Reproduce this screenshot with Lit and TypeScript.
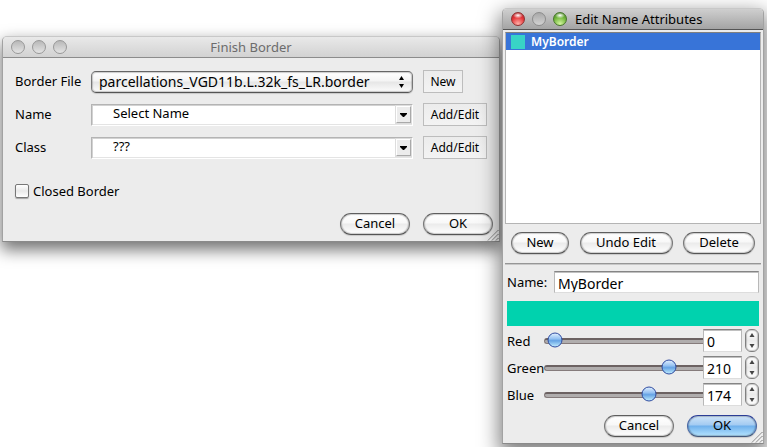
import { LitElement, html, css, svg } from "lit";
import { customElement, property, state } from "lit/decorators.js";

const shared = css`
  * {
    box-sizing: border-box;
  }
  button,
  input,
  select {
    font: inherit;
    color: inherit;
    margin: 0;
  }
  .pill {
    height: 22px;
    padding: 0 0 2px;
    border: 1px solid #666;
    border-color: #5e5e5e #777 #555;
    border-radius: 11px;
    background: linear-gradient(#fff, #f8f8f8 45%, #ebebeb 50%, #fff);
    box-shadow: inset 0 0 1px 1px rgba(0, 0, 0, 0.2), 0 1px 1px rgba(0, 0, 0, 0.15);
    line-height: 18px;
    text-align: center;
  }
  .pill.default {
    border-color: #2c3d96 #4a68a4 #44597c;
    background: linear-gradient(#cfe4f8, #a3cbf2 45%, #6fb0ec 50%, #b4e4ff);
  }
`;

@customElement("app-window")
export class AppWindow extends LitElement {
  @property() heading = "";
  @property({ type: Boolean, reflect: true }) active = false;

  static styles = [
    shared,
    css`
      :host {
        display: block;
        position: relative;
        border: 1px solid #a2a2a2;
        border-top-color: #c8c8c8;
        border-bottom-color: #8a8a8a;
        border-radius: 5px 5px 0 0;
        background: #ececec;
        box-shadow: 0 7px 16px 1px rgba(0, 0, 0, 0.55);
      }
      :host([active]) {
        z-index: 1;
        box-shadow: 0 8px 20px 3px rgba(0, 0, 0, 0.5);
      }
      .bar {
        display: grid;
        grid-template-columns: 1fr auto 1fr;
        align-items: center;
        height: 21px;
        border-bottom: 1px solid #8c8c8c;
        border-radius: 4px 4px 0 0;
        background: linear-gradient(#e9e9e9, #d2d2d2);
        color: #6c6c6c;
      }
      :host([active]) .bar {
        border-bottom-color: #555;
        background: linear-gradient(#cfcfcf, #a4a4a4);
        color: #000;
      }
      .lights {
        display: flex;
        gap: 7px;
        padding: 0 8px;
      }
      .light {
        width: 14px;
        height: 14px;
        padding: 0;
        border: 1px solid #989898;
        border-radius: 50%;
        background: linear-gradient(#b8b8b8, #e4e4e4);
      }
      :host([active]) .light {
        background: linear-gradient(#a8a8a8, #d2d2d2);
        border-color: #8c8c8c;
      }
      :host([active]) .light.close {
        border-color: #8d3030;
        background: radial-gradient(ellipse 5px 3px at 50% 20%, #fff, transparent),
          radial-gradient(circle at 50% 90%, #ffb0a8, #e5373a 55%, #a81c20);
      }
      :host([active]) .light.zoom {
        border-color: #48752c;
        background: radial-gradient(ellipse 5px 3px at 50% 20%, #fff, transparent),
          radial-gradient(circle at 50% 90%, #d4f6a0, #74b83e 55%, #3d7a1e);
      }
      .title {
        white-space: nowrap;
        line-height: 20px;
      }
      .grip {
        position: absolute;
        right: 0;
        bottom: 0;
        display: block;
      }
    `,
  ];

  render() {
    return html`
      <div class="bar">
        <div class="lights">
          <button class="light close" aria-label="Close"></button>
          <button class="light" aria-label="Minimize"></button>
          <button class="light zoom" aria-label="Zoom"></button>
        </div>
        <div class="title">${this.heading}</div>
      </div>
      <slot></slot>
      <svg class="grip" width="12" height="12" viewBox="0 0 12 12" aria-hidden="true">
        ${[1, 5, 9].map(
          (n) => svg`<path d="M${n} 11.5 L11.5 ${n}" stroke="#777" fill="none"/>
            <path d="M${n + 1} 11.5 L11.5 ${n + 1}" stroke="#fff" fill="none" opacity=".7"/>`
        )}
      </svg>
    `;
  }
}

@customElement("finish-border")
export class FinishBorder extends LitElement {
  static styles = [
    shared,
    css`
      :host {
        display: block;
        padding: 12px 6px 6px 12px;
      }
      .form {
        display: grid;
        grid-template-columns: 66px 1fr 64px;
        column-gap: 10px;
        row-gap: 10px;
        align-items: center;
        padding-right: 6px;
      }
      .form label {
        padding-bottom: 2px;
        white-space: nowrap;
      }
      .field {
        position: relative;
        display: block;
      }
      select {
        appearance: none;
        display: block;
        width: 100%;
        height: 22px;
        padding: 0 24px 3px 21px;
        border: 1px solid #fff;
        border-top: 1px solid #b4b4b4;
        border-left: 1px solid #b4b4b4;
        border-radius: 0;
        background: #fff;
        box-shadow: inset 1px 1px 0 #d2d2d2, inset 0 -1px 0 #e4e4e4;
        line-height: 16px;
      }
      select.popup {
        padding: 0 24px 0 7px;
        border: 1px solid #666;
        border-color: #666 #777 #555;
        border-radius: 5px;
        background: linear-gradient(#fff, #f4f4f4 45%, #e6e6e6 50%, #fcfcfc);
        box-shadow: inset 0 0 1px 1px rgba(0, 0, 0, 0.2), 0 1px 1px rgba(0, 0, 0, 0.15);
        font-size: 14px;
      }
      .mark {
        position: absolute;
        top: 2px;
        right: 2px;
        width: 16px;
        height: 18px;
        pointer-events: none;
      }
      .mark.box {
        width: 15px;
        height: 17px;
        border: 1px solid #fff;
        border-right-color: #a9a9a9;
        border-bottom-color: #a9a9a9;
        outline: 1px solid #ddd;
        background: #ececec;
      }
      .mark svg {
        display: block;
      }
      .flat {
        height: 23px;
        padding: 0;
        border: 1px solid #bdbdbd;
        background: linear-gradient(#ececec, #f3f3f3);
        font-size: 12px;
        line-height: 20px;
      }
      .short {
        width: 40px;
      }
      .check {
        display: flex;
        align-items: center;
        gap: 4px;
        height: 20px;
        margin-top: 22px;
      }
      .check input {
        appearance: none;
        width: 14px;
        height: 14px;
        border: 1px solid #777;
        border-radius: 2px;
        background: linear-gradient(#fff, #e9e9e9 50%, #fff);
        box-shadow: 0 1px 1px rgba(0, 0, 0, 0.3);
      }
      .actions {
        display: flex;
        justify-content: flex-end;
        gap: 13px;
        margin-top: 12px;
      }
      .pill {
        width: 70px;
      }
    `,
  ];

  private combo(id: string, label: string, value: string) {
    return html`
      <label for=${id}>${label}</label>
      <span class="field">
        <select id=${id}><option>${value}</option></select>
        <span class="mark box">
          <svg width="13" height="15" viewBox="0 0 13 15"><path d="M3 6h7v1L7 10H6L3 7z" /></svg>
        </span>
      </span>
      <button class="flat">Add/Edit</button>
    `;
  }

  render() {
    return html`
      <div class="form">
        <label for="file">Border File</label>
        <span class="field">
          <select id="file" class="popup">
            <option>parcellations_VGD11b.L.32k_fs_LR.border</option>
          </select>
          <span class="mark">
            <svg width="16" height="18" viewBox="0 0 16 18">
              <path d="M4 7L6.500 3 9 7zM4 11h5L6.500 15z" />
            </svg>
          </span>
        </span>
        <button class="flat short">New</button>
        ${this.combo("name", "Name", "Select Name")} ${this.combo("class", "Class", "???")}
      </div>
      <label class="check"><input type="checkbox" />Closed Border</label>
      <div class="actions">
        <button class="pill">Cancel</button>
        <button class="pill">OK</button>
      </div>
    `;
  }
}

@customElement("edit-attributes")
export class EditAttributes extends LitElement {
  @state() private channels = [
    { name: "Red", value: 0 },
    { name: "Green", value: 210 },
    { name: "Blue", value: 174 },
  ];

  static styles = [
    shared,
    css`
      :host {
        display: block;
        padding: 2px 2px 6px;
      }
      .list {
        height: 192px;
        margin: 0;
        padding: 0;
        list-style: none;
        border: 1px solid #b4b4b4;
        border-top-color: #808080;
        background: #fff;
      }
      .item {
        display: flex;
        align-items: center;
        gap: 6px;
        height: 17px;
        padding-left: 5px;
        background: #3874d8;
        color: #fff;
        font-size: 12px;
        font-weight: 600;
      }
      .chip {
        width: 14px;
        height: 14px;
        background: #38d3c6;
      }
      .tools {
        display: flex;
        justify-content: space-between;
        padding: 8px 6px 9px;
      }
      .w1 {
        width: 58px;
      }
      .w2 {
        width: 93px;
      }
      .w3 {
        width: 72px;
      }
      .rule {
        height: 2px;
        margin: 0;
        border: 0;
        border-top: 1px solid #969696;
        border-bottom: 1px solid #c8c8c8;
      }
      .body {
        padding: 6px 2px 0;
      }
      .name {
        display: grid;
        grid-template-columns: 39px 1fr;
        column-gap: 8px;
        align-items: center;
      }
      .text,
      .num {
        min-width: 0;
        height: 22px;
        border: 1px solid #b8b8b8;
        border-top-color: #858585;
        border-bottom-color: #ddd;
        background: #fff;
        box-shadow: inset 0 1px 0 #c0c0c0;
        padding: 2px 3px 0;
        font-size: 14px;
        line-height: 16px;
      }
      .swatch {
        height: 25px;
        margin-top: 8px;
        background: #00d2ae;
      }
      .rows {
        display: grid;
        row-gap: 4px;
        padding-top: 3px;
      }
      .row {
        display: grid;
        grid-template-columns: 37px 1fr 39px 14px;
        align-items: center;
        height: 23px;
        padding-right: 3px;
      }
      .row label {
        white-space: nowrap;
      }
      .range {
        appearance: none;
        width: 100%;
        min-width: 0;
        height: 16px;
        background: none;
      }
      .range::-webkit-slider-runnable-track {
        height: 6px;
        border: 1px solid #857b7b;
        border-top: 2px solid #6c6262;
        border-right: 0;
        border-radius: 3px 0 0 3px;
        background: #b0adad;
      }
      .range::-webkit-slider-thumb {
        appearance: none;
        width: 20px;
        height: 16px;
        margin-top: -8px;
        background: url("data:image/svg+xml,%3Csvg xmlns='http://www.w3.org/2000/svg' width='20' height='16'%3E%3Cdefs%3E%3ClinearGradient id='g' x2='0' y2='1'%3E%3Cstop stop-color='%23e4f1ff'/%3E%3Cstop offset='.4' stop-color='%2396c2f2'/%3E%3Cstop offset='.55' stop-color='%2365a3e4'/%3E%3Cstop offset='1' stop-color='%23c4f0ff'/%3E%3C/linearGradient%3E%3C/defs%3E%3Ccircle cx='10' cy='8' r='7' fill='url(%23g)' stroke='%232f4ba0'/%3E%3C/svg%3E")
          center no-repeat;
      }
      .num {
        width: 39px;
        height: 23px;
        appearance: textfield;
      }
      .num::-webkit-inner-spin-button {
        display: none;
      }
      .stepper {
        display: flex;
        flex-direction: column;
        width: 14px;
        height: 23px;
        margin-left: 3px;
        border: 1px solid #808080;
        border-radius: 6px;
        background: linear-gradient(#fff, #ebebeb 50%, #fff);
        box-shadow: inset 0 0 1px 1px rgba(0, 0, 0, 0.2);
      }
      .step {
        flex: 1;
        min-height: 0;
        padding: 0;
        border: 0;
        background: none;
      }
      .step svg {
        display: block;
        margin: 0 auto;
      }
      .actions {
        display: flex;
        justify-content: flex-end;
        gap: 13px;
        padding: 9px 2px 0;
      }
      .wide {
        width: 70px;
      }
    `,
  ];

  private setChannel(name: string, value: number) {
    const clamped = Math.max(0, Math.min(255, value));
    this.channels = this.channels.map((c) => (c.name === name ? { name, value: clamped } : c));
  }

  private row(c: { name: string; value: number }) {
    const change = (e: Event) => this.setChannel(c.name, Number((e.target as HTMLInputElement).value));
    return html`
      <div class="row">
        <label for=${c.name}>${c.name}</label>
        <input class="range" id=${c.name} type="range" min="0" max="255" .value=${String(c.value)} @input=${change} />
        <input class="num" type="number" min="0" max="255" aria-label="${c.name} value" .value=${String(c.value)} @change=${change} />
        <span class="stepper">
          <button class="step" aria-label="Increase ${c.name}" @click=${() => this.setChannel(c.name, c.value + 1)}>
            <svg width="8" height="8" viewBox="0 0 8 8"><path d="M1.500 6L4 2l2.500 4z" fill="#444" /></svg>
          </button>
          <button class="step" aria-label="Decrease ${c.name}" @click=${() => this.setChannel(c.name, c.value - 1)}>
            <svg width="8" height="8" viewBox="0 0 8 8"><path d="M1.500 2h5L4 6z" fill="#444" /></svg>
          </button>
        </span>
      </div>
    `;
  }

  render() {
    return html`
      <ul class="list">
        <li class="item"><span class="chip"></span>MyBorder</li>
      </ul>
      <div class="tools">
        <button class="pill w1">New</button>
        <button class="pill w2">Undo Edit</button>
        <button class="pill w3">Delete</button>
      </div>
      <hr class="rule" />
      <div class="body">
        <div class="name">
          <label for="attr">Name:</label>
          <input class="text" id="attr" type="text" value="MyBorder" />
        </div>
        <div class="swatch"></div>
        <div class="rows">${this.channels.map((c) => this.row(c))}</div>
        <div class="actions">
          <button class="pill wide">Cancel</button>
          <button class="pill wide default">OK</button>
        </div>
      </div>
    `;
  }
}

@customElement("app-root")
export class AppRoot extends LitElement {
  static styles = css`
    :host {
      display: flex;
      align-items: flex-start;
      gap: 2px;
      padding: 8px 3px 3px 2px;
      background: #fff;
      overflow: hidden;
      font: 13px/16px "Noto Sans", "Open Sans", sans-serif;
      color: #000;
    }
    .finish {
      flex: 1;
      min-width: 0;
      margin-top: 28px;
    }
    .edit {
      flex: 0 0 260px;
    }
  `;

  render() {
    return html`
      <app-window class="finish" heading="Finish Border"><finish-border></finish-border></app-window>
      <app-window class="edit" heading="Edit Name Attributes" active><edit-attributes></edit-attributes></app-window>
    `;
  }
}
